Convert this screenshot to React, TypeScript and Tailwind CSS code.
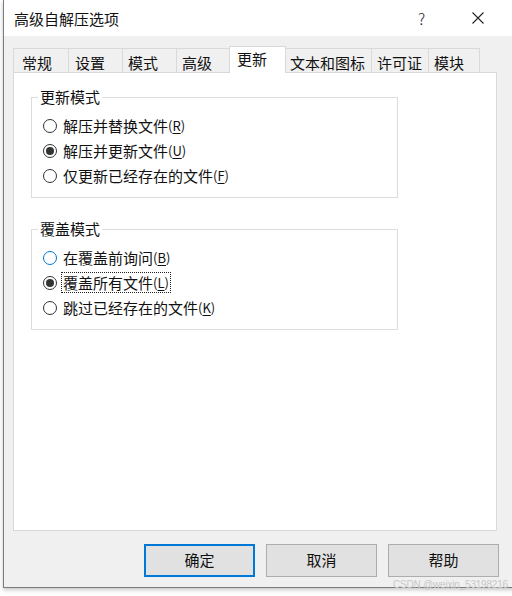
import React from "react";

const FONT = { fontFamily: '"Noto Sans CJK SC", "Microsoft YaHei", sans-serif' };

function Radio({ checked, hover }: { checked?: boolean; hover?: boolean }) {
  return (
    <span
      className={`flex h-[14px] w-[14px] shrink-0 items-center justify-center rounded-full border bg-white ${
        hover ? "border-[#0078d7]" : "border-[#333333]"
      }`}
    >
      {checked && <span className="h-[8px] w-[8px] rounded-full bg-[#333333]" />}
    </span>
  );
}

function Option({
  label,
  mn,
  checked,
  hover,
  focus,
}: {
  label: string;
  mn: string;
  checked?: boolean;
  hover?: boolean;
  focus?: boolean;
}) {
  return (
    <div className="flex h-[25px] items-center">
      <Radio checked={checked} hover={hover} />
      <span
        className={`ml-[4px] flex items-center px-px leading-[19px] ${
          focus ? "border border-dotted border-[#222]" : "border border-transparent"
        }`}
      >
        <span className="text-[15px]">{label}</span>
        <span className="text-[13px]">
          (<span className="underline underline-offset-2">{mn}</span>)
        </span>
      </span>
    </div>
  );
}

function Group({ title, children, className }: { title: string; children: React.ReactNode; className?: string }) {
  return (
    <div className={`relative ml-[17px] w-[367px] border border-[#dcdcdc] pl-[11px] pt-[15px] pb-[9px] ${className ?? ""}`}>
      <span className="absolute -top-[11px] left-[6px] bg-white px-[2px] text-[15px] leading-[20px]">{title}</span>
      {children}
    </div>
  );
}

const tabs: [string, number, number][] = [
  ["常规", 56, 8],
  ["设置", 54, 6],
  ["模式", 54, 5],
  ["高级", 53, 5],
  ["更新", 56, 6],
  ["文本和图标", 86, 4],
  ["许可证", 57, 5],
  ["模块", 51, 5],
];

export default function App() {
  return (
    <div className="relative h-[596px] w-[512px] overflow-hidden bg-white text-[#111]" style={FONT}>
      <div className="ml-[3px] flex h-[588px] w-[520px] flex-col border-l border-b border-[#7a7a7a] shadow-[0_2px_4px_rgba(0,0,0,0.22)]">
        {/* title bar */}
        <div className="flex h-[36px] shrink-0 items-center bg-white pl-[10px]">
          <span className="text-[15px] leading-none">高级自解压选项</span>
          <span className="ml-[299px] text-[16px] font-light leading-none text-[#222]">?</span>
          <svg className="ml-[47px]" width="12" height="12" viewBox="0 0 12 12">
            <path d="M0.5 0.5 L11.5 11.5 M11.5 0.5 L0.5 11.5" stroke="#222" strokeWidth="1.1" fill="none" />
          </svg>
        </div>
        {/* body */}
        <div className="flex flex-1 flex-col bg-[#f0f0f0] pl-[9px] pt-[10px]">
          <div className="flex h-[26px] items-end">
            {tabs.map(([t, w, p], i) =>
              t === "更新" ? (
                <div
                  key={t}
                  style={{ width: w + 1, paddingLeft: p + 1 }}
                  className="relative z-10 -mb-px -ml-px flex h-[27px] items-start border-x border-t border-[#d9d9d9] bg-white pt-[3px] text-[15px] leading-[18px]"
                >
                  {t}
                </div>
              ) : (
                <div
                  key={t}
                  style={{ width: w, paddingLeft: p }}
                  className={`flex h-[24px] items-center border-r border-t border-[#d9d9d9] bg-[#f0f0f0] pt-[4px] text-[15px] leading-[18px] ${
                    i === 0 ? "border-l" : ""
                  }`}
                >
                  {t}
                </div>
              )
            )}
          </div>
          <div className="h-[459px] w-[484px] border border-[#d9d9d9] bg-white pt-[24px]">
            <Group title="更新模式">
              <Option label="解压并替换文件" mn="R" />
              <Option label="解压并更新文件" mn="U" checked />
              <Option label="仅更新已经存在的文件" mn="F" />
            </Group>
            <Group title="覆盖模式" className="mt-[31px]">
              <Option label="在覆盖前询问" mn="B" hover />
              <Option label="覆盖所有文件" mn="L" checked focus />
              <Option label="跳过已经存在的文件" mn="K" />
            </Group>
          </div>
          <div className="mt-[13px] flex gap-[11px] pl-[131px]">
            <button className="h-[33px] w-[111px] border-2 border-[#0078d7] bg-[#e1e1e1] text-[15px]">确定</button>
            <button className="h-[33px] w-[111px] border border-[#adadad] bg-[#e1e1e1] text-[15px]">取消</button>
            <button className="h-[33px] w-[111px] border border-[#adadad] bg-[#e1e1e1] text-[15px]">帮助</button>
          </div>
        </div>
      </div>
      <span
        className="absolute left-[393px] top-[579px] whitespace-nowrap text-[10px] leading-[12px] tracking-[-0.2px] text-[#c8c8c8]"
        style={{ fontFamily: '"Liberation Sans", Arial, sans-serif' }}
      >
        CSDN @weixin_53198216
      </span>
    </div>
  );
}
